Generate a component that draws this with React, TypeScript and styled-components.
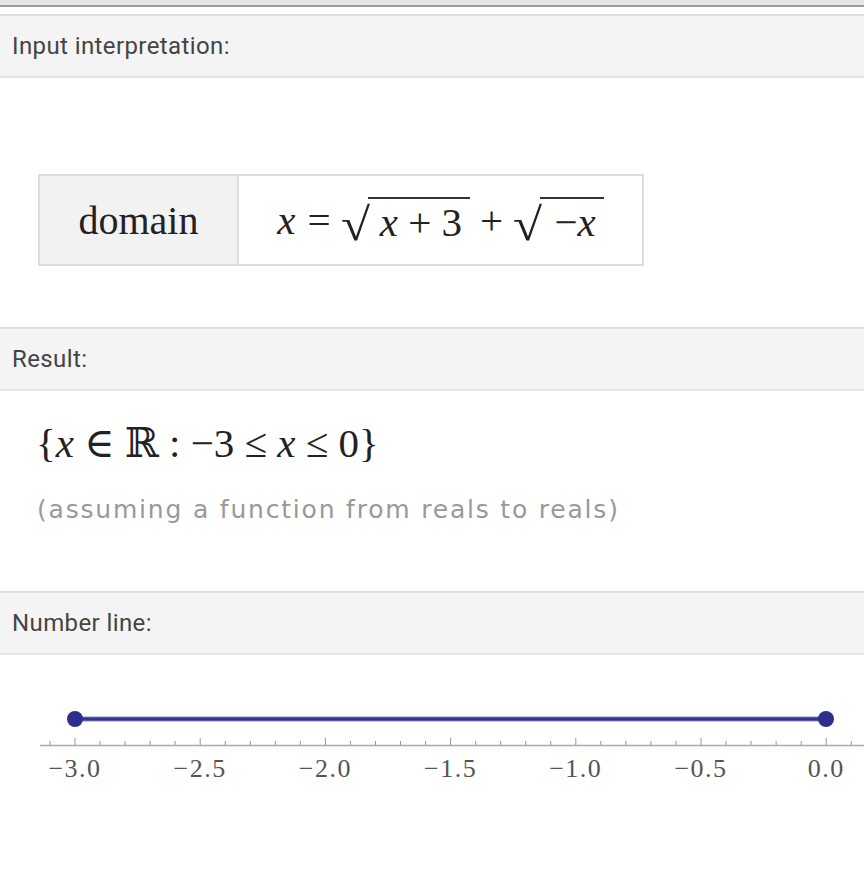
import styled, { createGlobalStyle } from "styled-components";

const Global = createGlobalStyle`
  html, body {
    margin: 0;
    padding: 0;
    background: #fff;
  }
  body {
    font-family: Roboto, "Liberation Sans", sans-serif;
  }
`;

const Page = styled.div`
  width: 864px;
  min-height: 894px;
  background: #fff;
  overflow: hidden;
`;

const TopStrip = styled.div`
  height: 5px;
  background: #e6e6e6;
  border-bottom: 2px solid #9a9a9a;
`;

const Gap = styled.div`
  height: 7px;
  background: #fff;
`;

const PodHeader = styled.div`
  height: 60px;
  display: flex;
  align-items: center;
  padding-left: 12px;
  background: #f4f4f4;
  border-top: 2px solid #dedede;
  border-bottom: 2px solid #e4e4e4;
  font-family: Roboto, "Liberation Sans", sans-serif;
  font-size: 24px;
  letter-spacing: 0.4px;
  color: #444;
`;

const PodBody = styled.div<{ $h: number; $pt: number }>`
  height: ${(p) => p.$h}px;
  box-sizing: border-box;
  padding: ${(p) => p.$pt}px 0 0 36px;
  display: flex;
  flex-direction: column;
  align-items: flex-start;
`;

const Table = styled.div`
  display: flex;
  margin-left: 2px;
  border: 2px solid #dcdcdc;
  height: 92px;
  box-sizing: border-box;
`;

const Cell = styled.div<{ $head?: boolean }>`
  display: flex;
  align-items: center;
  justify-content: center;
  width: ${(p) => (p.$head ? "197px" : "403px")};
  background: ${(p) => (p.$head ? "#f2f2f2" : "#fff")};
  border-left: ${(p) => (p.$head ? "none" : "2px solid #dcdcdc")};
  font-family: "Liberation Serif", "DejaVu Serif", serif;
  font-size: 40px;
  color: #222;
`;

const Math = styled.div`
  display: flex;
  align-items: flex-end;
  font-family: "Liberation Serif", "DejaVu Serif", serif;
  font-size: 41px;
  color: #222;
  white-space: pre;
`;

const Var = styled.span`
  font-style: italic;
`;

const Op = styled.span<{ $l: number; $r: number }>`
  margin: 0 ${(p) => p.$r}px 0 ${(p) => p.$l}px;
`;

const Radical = styled.span`
  display: inline-flex;
  align-items: flex-end;
`;

const RootSign = styled.span`
  font-size: 46px;
  line-height: 1;
  margin-bottom: -4px;
  transform: scaleX(1.15);
`;

const Radicand = styled.span<{ $pl: number }>`
  border-top: 2px solid #333;
  padding: 2px 8px 0 ${(p) => p.$pl}px;
  line-height: 1.05;
`;

const Note = styled.div`
  margin-top: 28px;
  margin-left: 1px;
  font-family: "DejaVu Sans", "Noto Sans", sans-serif;
  font-size: 25px;
  letter-spacing: 1.8px;
  color: #999;
`;

const LineWrap = styled.div`
  padding-top: 36px;
`;

function NumberLine() {
  const x0 = 75;
  const step = 25.04;
  const ticks = [];
  for (let i = -1; i <= 31; i++) {
    const x = x0 + i * step;
    if (x > 864) break;
    const major = i % 5 === 0 && i >= 0 && i <= 30;
    ticks.push(
      <line key={i} x1={x} x2={x} y1={54} y2={major ? 47 : 50} stroke="#999" strokeWidth={1} />
    );
  }
  const labels = ["−3.0", "−2.5", "−2.0", "−1.5", "−1.0", "−0.5", "0.0"];
  return (
    <svg width={864} height={110} viewBox="0 0 864 110">
      <line x1={40} x2={864} y1={54.5} y2={54.5} stroke="#aaa" strokeWidth={1.5} />
      {ticks}
      <line x1={75} x2={826} y1={28} y2={28} stroke="#c5c6e6" strokeWidth={6} />
      <line x1={75} x2={826} y1={28} y2={28} stroke="#33358f" strokeWidth={3.5} />
      <circle cx={75} cy={28} r={8} fill="#2d2f8c" />
      <circle cx={826} cy={28} r={8} fill="#2d2f8c" />
      {labels.map((l, i) => (
        <text
          key={l}
          x={x0 + i * step * 5}
          y={86}
          textAnchor="middle"
          fontFamily="'Liberation Serif', 'DejaVu Serif', serif"
          fontSize={26}
          letterSpacing={1.5}
          fill="#555"
        >
          {l}
        </text>
      ))}
    </svg>
  );
}

export default function App() {
  return (
    <Page>
      <Global />
      <TopStrip />
      <Gap />
      <PodHeader>Input interpretation:</PodHeader>
      <PodBody $h={249} $pt={96}>
        <Table>
          <Cell $head>domain</Cell>
          <Cell>
            <Math>
              <Var>x</Var>
              <Op $l={12} $r={12}>=</Op>
              <Radical>
                <RootSign>√</RootSign>
                <Radicand $pl={12}>
                  <Var>x</Var> + 3
                </Radicand>
              </Radical>
              <Op $l={10} $r={12}>+</Op>
              <Radical>
                <RootSign>√</RootSign>
                <Radicand $pl={14}>
                  −<Var>x</Var>
                </Radicand>
              </Radical>
            </Math>
          </Cell>
        </Table>
      </PodBody>
      <PodHeader>Result:</PodHeader>
      <PodBody $h={200} $pt={28}>
        <Math>
          {"{"}
          <Var>x</Var> ∈ ℝ : −3 ≤ <Var>x</Var> ≤ 0{"}"}
        </Math>
        <Note>(assuming a function from reals to reals)</Note>
      </PodBody>
      <PodHeader>Number line:</PodHeader>
      <LineWrap>
        <NumberLine />
      </LineWrap>
    </Page>
  );
}
